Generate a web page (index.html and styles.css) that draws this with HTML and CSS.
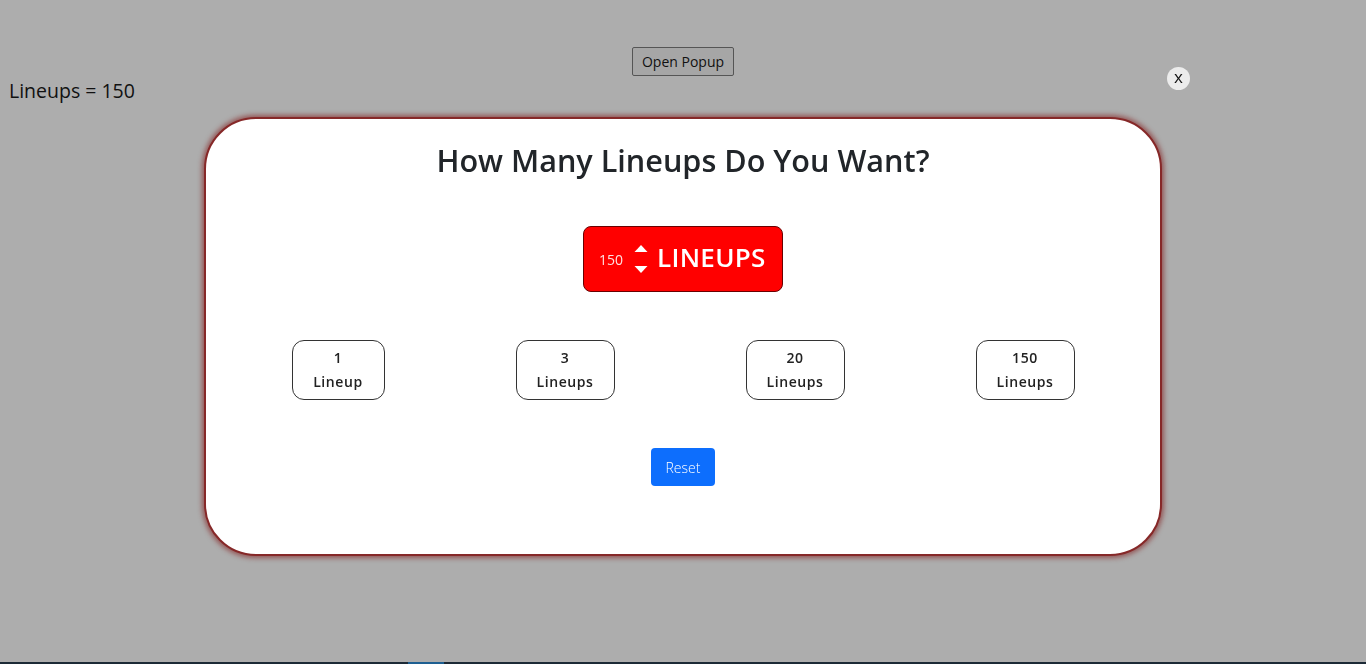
FILE: index.html
```html
<!DOCTYPE html>
<html>
<head>
<meta charset="utf-8">
<link rel="stylesheet" href="styles.css">
</head>
<body>
<div class="page">
  <div class="opener"><button class="open-btn">Open Popup</button></div>
  <p class="count">Lineups = 150</p>
</div>
<div class="overlay">
  <div class="popup">
    <button class="close-btn">x</button>
    <h2 class="title">How Many Lineups Do You Want?</h2>
    <div class="counter">
      <span class="num">150</span>
      <svg class="spin" width="14" height="30" viewBox="0 0 14 30">
        <polygon points="7,1 13.5,8 0.5,8" fill="#fff"/>
        <polygon points="0.5,22 13.5,22 7,29" fill="#fff"/>
      </svg>
      <span class="label">LINEUPS</span>
    </div>
    <div class="options">
      <button class="opt opt-narrow">1<br>Lineup</button>
      <button class="opt">3<br>Lineups</button>
      <button class="opt">20<br>Lineups</button>
      <button class="opt">150<br>Lineups</button>
    </div>
    <div class="reset-row"><button class="reset">Reset</button></div>
  </div>
</div>
<div class="taskbar"><span class="task-active"></span></div>
</body>
</html>
```
FILE: styles.css
```css
html, body {
  margin: 0;
  padding: 0;
  height: 100%;
}
body {
  background: #adadad;
  font-family: "Open Sans", "Noto Sans", sans-serif;
  color: #212529;
  overflow: hidden;
}
.page {
  padding-top: 47px;
}
.opener {
  display: flex;
  justify-content: center;
}
.open-btn {
  font-family: "Open Sans", sans-serif;
  font-size: 14px;
  height: 29px;
  width: 102px;
  padding: 0;
  background: #a6a6a6;
  border: 1px solid #555;
  border-radius: 2px;
  color: #111;
}
.count {
  margin: 2px 0 0 9px;
  font-size: 19.5px;
  line-height: 26px;
  color: #111;
}
.overlay {
  position: fixed;
  inset: 0;
  display: flex;
  justify-content: center;
  align-items: flex-start;
  padding-top: 117px;
}
.popup {
  position: relative;
  box-sizing: border-box;
  width: 958px;
  height: 439px;
  background: #fff;
  border: 2px solid #862828;
  border-radius: 52px;
  box-shadow: 0 0 5px 2px rgba(130, 25, 25, 0.6);
  display: flex;
  flex-direction: column;
  align-items: center;
}
.close-btn {
  position: absolute;
  top: -52px;
  right: -30px;
  width: 23px;
  height: 23px;
  border-radius: 50%;
  border: none;
  background: #ececec;
  font-family: "Open Sans", sans-serif;
  font-size: 17px;
  line-height: 20px;
  padding: 0 0 3px 0;
  color: #111;
}
.title {
  margin: 22px 0 0 0;
  font-size: 30.6px;
  font-weight: 600;
  line-height: 38px;
  color: #212529;
}
.counter {
  margin-top: 47px;
  box-sizing: border-box;
  width: 200px;
  height: 66px;
  background: #ff0000;
  border: 1px solid #6a0000;
  border-radius: 8px;
  display: flex;
  align-items: center;
  padding-left: 15px;
  color: #fff;
}
.num {
  font-size: 14px;
  color: #ffe0e0;
  width: 30px;
}
.spin {
  margin-left: 5px;
  margin-right: 9px;
}
.label {
  font-size: 26px;
  font-weight: 600;
  letter-spacing: 0.3px;
  margin-top: -4px;
}
.options {
  margin-top: 48px;
  display: flex;
  justify-content: center;
  gap: 131px;
}
.opt {
  box-sizing: border-box;
  width: 99px;
  height: 60px;
  background: #fff;
  border: 1px solid #333;
  border-radius: 12px;
  font-family: "Open Sans", sans-serif;
  font-size: 14px;
  font-weight: 600;
  line-height: 24px;
  letter-spacing: 0.6px;
  color: #222;
  padding: 0;
}
.opt-narrow {
  width: 93px;
}
.reset-row {
  margin-top: 48px;
}
.reset {
  width: 64px;
  height: 38px;
  background: #0d6efd;
  border: none;
  border-radius: 4px;
  color: #fff;
  font-family: "Open Sans", sans-serif;
  font-size: 14px;
  font-weight: 300;
  padding: 0;
}
.taskbar {
  position: fixed;
  left: 0;
  right: 0;
  bottom: 0;
  height: 2px;
  background: #1c2a36;
}
.task-active {
  display: block;
  margin-left: 408px;
  width: 36px;
  height: 2px;
  background: #1e5f91;
}
```
